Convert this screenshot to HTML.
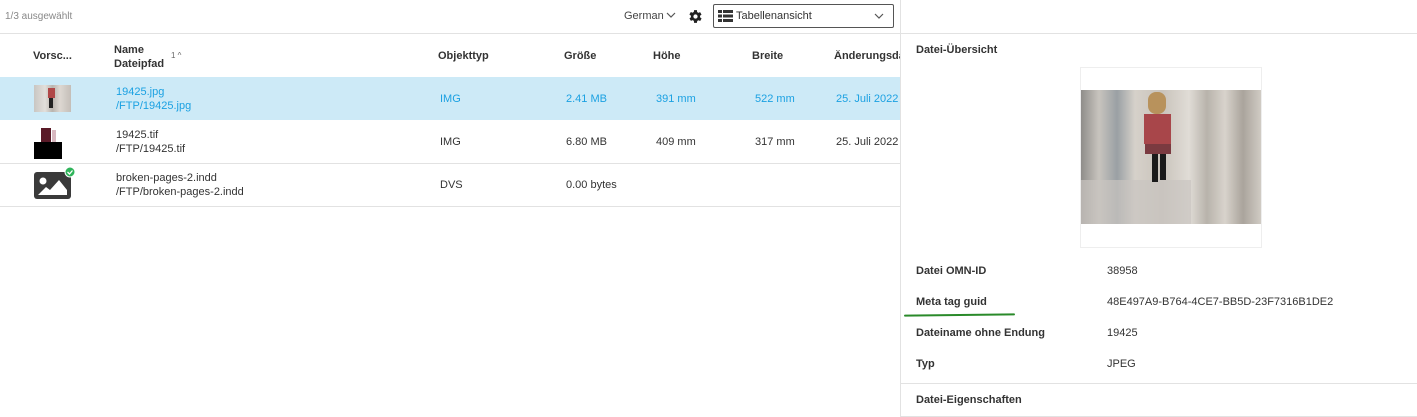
<!DOCTYPE html>
<html><head><meta charset="utf-8"><style>
*{margin:0;padding:0;box-sizing:border-box}
body{width:1417px;height:417px;background:#fff;font-family:"Liberation Sans",Arial,sans-serif;font-size:11px;color:#333;position:relative;overflow:hidden}
.a{position:absolute;white-space:nowrap}
.b{font-weight:bold;color:#333}
.hl{color:#1ba1e2}
.line{position:absolute;height:1px;background:#e2e2e2}
</style></head><body>
<div class="a" style="left:5px;top:11px;color:#888;font-size:10px">1/3 ausgewählt</div>
<div class="a" style="left:624px;top:10px;font-size:11px;color:#444">German</div>
<svg class="a" style="left:666px;top:12px" width="10" height="7" viewBox="0 0 10 7"><path d="M1 1l4 4 4-4" stroke="#555" fill="none" stroke-width="1.2"/></svg>
<svg class="a" style="left:687px;top:8px" width="17" height="17" viewBox="0 0 24 24"><path fill="#222" d="M19.4 13a7.5 7.5 0 000-2l2.1-1.6-2-3.5-2.5 1a7 7 0 00-1.7-1L15 3h-4l-.4 2.7a7 7 0 00-1.7 1l-2.5-1-2 3.5L6.6 11a7.5 7.5 0 000 2l-2.1 1.6 2 3.5 2.5-1a7 7 0 001.7 1L11 21h4l.4-2.7a7 7 0 001.7-1l2.5 1 2-3.5zM13 15a3 3 0 110-6 3 3 0 010 6z" transform="translate(-1 0)"/></svg>
<div class="a" style="left:713px;top:4px;width:181px;height:24px;border:1px solid #555;border-radius:2px"></div>
<svg class="a" style="left:718px;top:10px" width="15" height="12" viewBox="0 0 15 12"><g fill="#333"><rect x="0" y="0" width="4" height="3"/><rect x="5" y="0" width="10" height="3"/><rect x="0" y="4.5" width="4" height="3"/><rect x="5" y="4.5" width="10" height="3"/><rect x="0" y="9" width="4" height="3"/><rect x="5" y="9" width="10" height="3"/></g></svg>
<div class="a" style="left:736px;top:10px;font-size:11px;color:#333">Tabellenansicht</div>
<svg class="a" style="left:874px;top:13px" width="10" height="7" viewBox="0 0 10 7"><path d="M1 1l4 4 4-4" stroke="#555" fill="none" stroke-width="1.2"/></svg>

<div class="line" style="left:0;top:33px;width:1417px"></div>
<div class="a" style="left:900px;top:0;width:1px;height:417px;background:#e2e2e2"></div>

<div class="a b" style="left:33px;top:50px">Vorsc...</div>
<div class="a b" style="left:114px;top:43px;line-height:14px">Name<br>Dateipfad</div>
<div class="a" style="left:171px;top:51px;font-size:8px;color:#666">1 ^</div>
<div class="a b" style="left:438px;top:50px">Objekttyp</div>
<div class="a b" style="left:564px;top:50px">Größe</div>
<div class="a b" style="left:653px;top:50px">Höhe</div>
<div class="a b" style="left:752px;top:50px">Breite</div>
<div class="a b" style="left:834px;top:50px;width:66px;overflow:hidden">Änderungsdatum</div>

<div class="a" style="left:0;top:77px;width:900px;height:43px;background:#cdeaf7"></div>
<div class="a" style="left:34px;top:85px;width:37px;height:27px;background:linear-gradient(90deg,#c9c6c2,#e2dfdb 30%,#b9b4ae 50%,#ddd8d2 70%,#c4beb8)"></div>
<div class="a" style="left:48px;top:88px;width:7px;height:10px;background:#b04848"></div>
<div class="a" style="left:49px;top:98px;width:4px;height:10px;background:#222"></div>
<div class="a hl" style="left:116px;top:85px;line-height:14px">19425.jpg<br>/FTP/19425.jpg</div>
<div class="a hl" style="left:440px;top:93px">IMG</div>
<div class="a hl" style="left:566px;top:93px">2.41 MB</div>
<div class="a hl" style="left:656px;top:93px">391 mm</div>
<div class="a hl" style="left:755px;top:93px">522 mm</div>
<div class="a hl" style="left:836px;top:93px">25. Juli 2022</div>

<div class="a" style="left:41px;top:128px;width:10px;height:14px;background:#5a1a28"></div>
<div class="a" style="left:52px;top:130px;width:4px;height:12px;background:#d8b8c0"></div>
<div class="a" style="left:34px;top:142px;width:28px;height:17px;background:#000"></div>
<div class="a" style="left:116px;top:128px;line-height:14px">19425.tif<br>/FTP/19425.tif</div>
<div class="a" style="left:440px;top:136px">IMG</div>
<div class="a" style="left:566px;top:136px">6.80 MB</div>
<div class="a" style="left:656px;top:136px">409 mm</div>
<div class="a" style="left:755px;top:136px">317 mm</div>
<div class="a" style="left:836px;top:136px">25. Juli 2022</div>
<div class="line" style="left:0;top:163px;width:900px"></div>

<svg class="a" style="left:34px;top:167px" width="42" height="33" viewBox="0 0 42 33"><rect x="0" y="5" width="37" height="27" rx="3" fill="#3a3a3a"/><circle cx="9" cy="14" r="3.5" fill="#fff"/><path d="M4 28l8-8 4 3 9-10 8 10v5z" fill="#fff"/><circle cx="36" cy="5" r="5" fill="#2fb45a" stroke="#fff" stroke-width="1"/><path d="M33.5 5l2 2 3-3.5" stroke="#fff" fill="none" stroke-width="1.3"/></svg>
<div class="a" style="left:116px;top:171px;line-height:14px">broken-pages-2.indd<br>/FTP/broken-pages-2.indd</div>
<div class="a" style="left:440px;top:179px">DVS</div>
<div class="a" style="left:566px;top:179px">0.00 bytes</div>
<div class="line" style="left:0;top:206px;width:900px"></div>

<div class="a b" style="left:916px;top:44px">Datei-Übersicht</div>
<div class="a" style="left:1080px;top:67px;width:182px;height:181px;border:1px solid #eee"></div>
<div class="a" style="left:1081px;top:90px;width:180px;height:134px;background:linear-gradient(90deg,#8f8d8a 0%,#c8c4be 10%,#9aa0a4 20%,#d6d1ca 30%,#c9c3bb 45%,#e0dcd6 60%,#b8b3ab 70%,#d8d3cc 80%,#aaa49c 90%,#d0cbc4 100%)"></div>
<div class="a" style="left:1081px;top:180px;width:110px;height:44px;background:#c9c5c0;opacity:.7"></div>
<div class="a" style="left:1148px;top:92px;width:18px;height:22px;border-radius:8px;background:#b8925c"></div>
<div class="a" style="left:1144px;top:114px;width:27px;height:30px;background:#a8464a"></div>
<div class="a" style="left:1145px;top:144px;width:26px;height:10px;background:#7a3a40"></div>
<div class="a" style="left:1152px;top:154px;width:6px;height:28px;background:#1a1a1a"></div>
<div class="a" style="left:1160px;top:154px;width:6px;height:26px;background:#1a1a1a"></div>

<div class="a b" style="left:916px;top:265px">Datei OMN-ID</div>
<div class="a" style="left:1107px;top:265px">38958</div>
<div class="a b" style="left:916px;top:296px">Meta tag guid</div>
<div class="a" style="left:1107px;top:296px">48E497A9-B764-4CE7-BB5D-23F7316B1DE2</div>
<div class="a" style="left:904px;top:314px;width:111px;height:2px;background:#2a8a2a;border-radius:1px;transform:rotate(-0.6deg)"></div>
<div class="a b" style="left:916px;top:327px">Dateiname ohne Endung</div>
<div class="a" style="left:1107px;top:327px">19425</div>
<div class="a b" style="left:916px;top:358px">Typ</div>
<div class="a" style="left:1107px;top:358px">JPEG</div>
<div class="line" style="left:901px;top:383px;width:516px"></div>
<div class="a b" style="left:916px;top:394px">Datei-Eigenschaften</div>
<div class="line" style="left:901px;top:416px;width:516px"></div>
</body></html>
